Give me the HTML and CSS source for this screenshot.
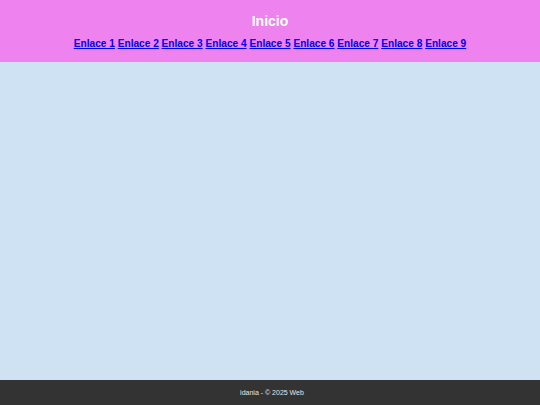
FILE: index.html
```html
<!DOCTYPE html>
<html lang="es">
<head>
<meta charset="utf-8">
<title>Inicio</title>
<link rel="stylesheet" href="styles.css">
</head>
<body>
<div class="page">
  <header class="header">
    <h1 class="title">Inicio</h1>
    <nav class="nav">
      <a href="#">Enlace 1</a> <a href="#">Enlace 2</a> <a href="#">Enlace 3</a> <a href="#">Enlace 4</a> <a href="#">Enlace 5</a> <a href="#">Enlace 6</a> <a href="#">Enlace 7</a> <a href="#">Enlace 8</a> <a href="#">Enlace 9</a>
    </nav>
  </header>
  <main class="main"></main>
  <footer class="footer">idania - © 2025 Web</footer>
</div>
</body>
</html>
```
FILE: styles.css
```css
html, body {
  margin: 0;
  padding: 0;
  height: 100%;
}
body {
  font-family: "Liberation Sans", Arial, sans-serif;
}
.page {
  display: flex;
  flex-direction: column;
  min-height: 100vh;
}
.header {
  background: #ee82ee;
  text-align: center;
  padding: 13px 0 12px;
  height: 62px;
  box-sizing: border-box;
}
.title {
  margin: 0;
  color: #ffffff;
  font-size: 14px;
  line-height: 17px;
  font-weight: bold;
}
.nav {
  margin-top: 8px;
  font-size: 10.15px;
  line-height: 12px;
  font-weight: bold;
}
.nav a {
  color: #0000ee;
  text-decoration: underline;
}
.main {
  flex: 1;
  background: #cfe2f3;
}
.footer {
  background: #333333;
  color: #e6e6e6;
  text-align: center;
  font-size: 7px;
  height: 25px;
  line-height: 25px;
  padding-left: 4px;
}
```
